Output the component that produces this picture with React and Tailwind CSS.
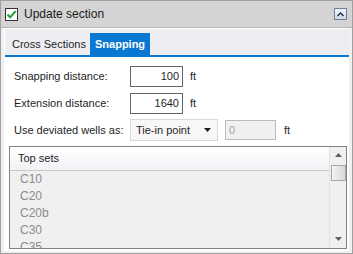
import React from "react";

const items = ["C10", "C20", "C20b", "C30", "C35"];

export default function App() {
  return (
    <div
      className="w-[353px] h-[254px] overflow-hidden bg-[#f0f0f0] border border-[#a0a0a0] flex flex-col text-[11px] text-[#1e1e1e]"
      style={{ fontFamily: '"Liberation Sans", Arial, sans-serif' }}
    >
      {/* header */}
      <div className="h-[27px] shrink-0 bg-[#d4d4d4] border-b border-[#b4b4b4] flex items-center pl-[4px] pr-[5px]">
        <div className="w-[13px] h-[13px] bg-white border border-[#333] flex items-center justify-center">
          <svg width="11" height="11" viewBox="0 0 11 11">
            <path d="M1.5 5.5 L4.2 8.3 L9.6 2.2" fill="none" stroke="#1f9d33" strokeWidth="2" />
          </svg>
        </div>
        <span className="ml-[6px] text-[12px] text-[#1a1a1a]">Update section</span>
        <div className="ml-auto w-[13px] h-[12px] border border-[#6f7f96] bg-gradient-to-b from-[#f4f7fb] to-[#cfd9e6] flex items-center justify-center">
          <svg width="7" height="5" viewBox="0 0 7 5">
            <path d="M0.5 4 L3.5 1 L6.5 4" fill="none" stroke="#1a2a44" strokeWidth="1.4" />
          </svg>
        </div>
      </div>

      {/* body */}
      <div className="flex-1 flex flex-col mx-[3px] mb-[2px] border-l border-t border-white bg-[#eeeef2]">
        {/* tab strip */}
        <div className="h-[26px] shrink-0 flex items-end pl-[3px]">
          <div className="h-[22px] px-[4px] flex items-center text-[#1e1e1e]">Cross Sections</div>
          <div className="h-[22px] px-[5px] flex items-center bg-[#0a78d2] text-white font-bold">Snapping</div>
        </div>
        <div className="h-[2px] shrink-0 bg-[#0a78d2]" />

        {/* content */}
        <div className="flex-1 flex flex-col bg-white pt-[9px] pl-[9px] pr-[1px]">
          <div className="flex items-center h-[21px] shrink-0">
            <span className="w-[116px]">Snapping distance:</span>
            <div className="w-[53px] h-[21px] border border-[#646464] bg-white flex items-center justify-end pr-[3px]">100</div>
            <span className="ml-[7px]">ft</span>
          </div>
          <div className="flex items-center h-[21px] mt-[6px] shrink-0">
            <span className="w-[116px]">Extension distance:</span>
            <div className="w-[53px] h-[21px] border border-[#646464] bg-white flex items-center justify-end pr-[3px]">1640</div>
            <span className="ml-[7px]">ft</span>
          </div>
          <div className="flex items-center h-[22px] mt-[5px] shrink-0">
            <span className="w-[116px]">Use deviated wells as:</span>
            <div className="w-[88px] h-[22px] border border-[#d9d9d9] bg-[#f7f7f7] flex items-center pl-[5px] pr-[6px]">
              <span>Tie-in point</span>
              <svg className="ml-auto" width="7" height="4" viewBox="0 0 7 4">
                <path d="M0 0 H7 L3.5 4 Z" fill="#1e1e1e" />
              </svg>
            </div>
            <div className="ml-[7px] w-[51px] h-[20px] border border-[#bcbcbc] bg-[#f0f0f0] flex items-center pl-[3px] text-[#a0a0a0]">0</div>
            <span className="ml-[8px]">ft</span>
          </div>

          {/* list */}
          <div className="mt-[5px] -ml-[5px] mr-[1px] h-[103px] shrink-0 border border-[#828282] bg-[#f0f0f0] flex overflow-hidden">
            <div className="flex-1 flex flex-col overflow-hidden">
              <div className="h-[24px] shrink-0 border-b border-[#c8c8c8] bg-gradient-to-b from-white to-[#f2f3f6] flex items-center pl-[8px] text-[#1e1e1e]">
                Top sets
              </div>
              <div className="flex flex-col pl-[10px] text-[#8c8c8c] text-[12px]">
                {items.map((t) => (
                  <div key={t} className="h-[17px] leading-[17px] shrink-0">{t}</div>
                ))}
              </div>
            </div>
            <div className="w-[17px] shrink-0 border-l border-[#e2e2e2] bg-[#f0f0f0] flex flex-col items-center">
              <div className="h-[16px] flex items-center justify-center">
                <svg width="7" height="4" viewBox="0 0 7 4">
                  <path d="M0 4 H7 L3.5 0 Z" fill="#606060" />
                </svg>
              </div>
              <div className="w-[15px] h-[16px] mt-[2px] border border-[#a8a8a8] bg-gradient-to-r from-[#f4f4f4] to-[#d8d8d8]" />
              <div className="mt-auto mb-[4px] h-[10px] flex items-center justify-center">
                <svg width="7" height="4" viewBox="0 0 7 4">
                  <path d="M0 0 H7 L3.5 4 Z" fill="#606060" />
                </svg>
              </div>
            </div>
          </div>
        </div>
      </div>
    </div>
  );
}
